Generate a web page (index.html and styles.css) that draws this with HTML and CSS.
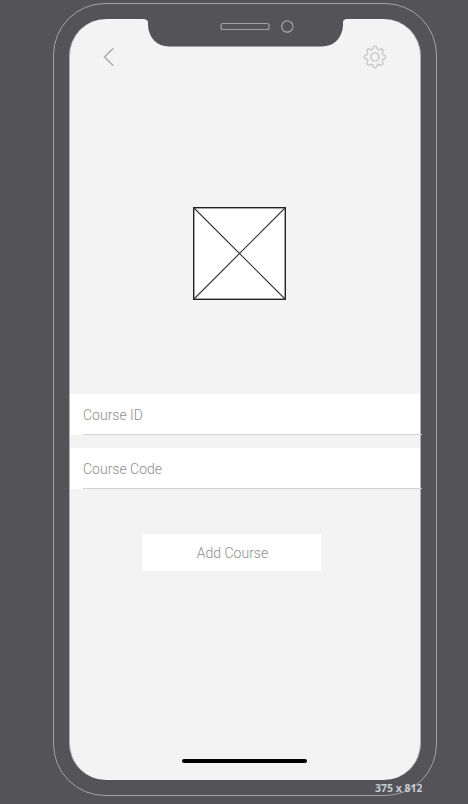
FILE: index.html
```html
<!DOCTYPE html>
<html lang="en">
<head>
<meta charset="utf-8">
<title>Add Course</title>
<link rel="stylesheet" href="styles.css">
</head>
<body>
<div class="phone">
  <main class="screen">
    <header class="toolbar">
      <svg class="back" viewBox="0 0 12 20"><path d="M10.3 1.2 1.5 10l8.8 8.8"/></svg>
      <svg class="gear" viewBox="-12 -12 24 24">
        <path d="M-1.400-10.200Q0-11.200 1.400-10.200L2.200-8.100Q3.200-7.200 4.200-7.300L6.220-8.200Q8-8 8.200-6.220L7.300-4.200Q7.200-3.200 8.100-2.200L10.200-1.400Q11.200 0 10.200 1.400L8.100 2.200Q7.200 3.200 7.300 4.200L8.200 6.220Q8 8 6.220 8.200L4.200 7.300Q3.200 7.200 2.200 8.100L1.400 10.200Q0 11.200-1.400 10.200L-2.200 8.100Q-3.200 7.200-4.200 7.300L-6.220 8.200Q-8 8-8.200 6.220L-7.300 4.200Q-7.200 3.200-8.100 2.200L-10.200 1.400Q-11.200 0-10.200-1.400L-8.100-2.200Q-7.200-3.200-7.300-4.200L-8.200-6.220Q-8-8-6.220-8.200L-4.200-7.300Q-3.200-7.200-2.200-8.100Z"/>
        <circle r="4.1"/>
      </svg>
    </header>
    <svg class="placeholder" viewBox="0 0 93 93">
      <rect x=".7" y=".7" width="91.6" height="91.6"/>
      <path d="m1 1 91 91M92 1 1 92"/>
    </svg>
    <form class="course-form">
      <div class="field"><span class="field-label">Course ID</span></div>
      <div class="field"><span class="field-label">Course Code</span></div>
      <button class="add" type="button">Add Course</button>
    </form>
    <div class="home-bar"></div>
  </main>
  <svg class="notch" viewBox="0 0 206 30">
    <path class="notch-shape" d="M0 0v1C4 1 6 2 6 5v3C7 20 15 28.500 27 28.500H180C192 28.500 200 20 201 8V5C201 2 202 1 206 1V0Z"/>
    <rect x="79" y="5.500" width="48" height="6" rx="2"/>
    <circle cx="145.300" cy="8.500" r="5.700"/>
  </svg>
  <span class="dimensions">375 x 812</span>
</div>
</body>
</html>
```
FILE: styles.css
```css
* { box-sizing: border-box; }
body {
  margin: 0;
  height: 804px;
  padding: 3px 0 0 53px;
  overflow: hidden;
  background: #545358;
  font-family: Roboto, sans-serif;
}
.phone {
  position: relative;
  width: 384px;
  height: 793px;
  padding: 15px;
  border: 1px solid #a3a3a6;
  border-radius: 52px;
}
.screen {
  display: flex;
  flex-direction: column;
  align-items: center;
  width: 352px;
  height: 761px;
  background: #f3f3f3;
  border: solid #b0b0b2;
  border-width: 0 1px;
  border-radius: 37px;
}
.toolbar {
  display: flex;
  justify-content: space-between;
  align-items: center;
  width: 100%;
  height: 24px;
  margin-top: 26px;
  padding: 0 33px;
}
.toolbar svg, .placeholder { fill: none; }
.back { width: 12px; height: 20px; stroke: #aeaeae; stroke-width: 1.6; }
.gear { width: 24px; height: 24px; stroke: #c8c8c8; stroke-width: 1.4; stroke-linejoin: round; }
.placeholder {
  flex: none;
  width: 93px;
  height: 93px;
  margin: 138px 0 94px 123px;
  align-self: flex-start;
  background: #fff;
}
.placeholder rect { stroke: #222; stroke-width: 1.4; }
.placeholder path { stroke: #333; stroke-width: 1.1; }
.course-form {
  display: flex;
  flex-direction: column;
  width: 100%;
  gap: 13px;
}
.field {
  height: 41px;
  padding-left: 13px;
  background: #fff;
}
.field-label {
  display: block;
  height: 41px;
  margin-right: -2px;
  border-bottom: 1px solid #d4d4d4;
  font-size: 14px;
  font-weight: 300;
  line-height: 42px;
  color: #8e8e8e;
}
.add {
  width: 179px;
  height: 37px;
  margin: 32px 0 0 72px;
  padding: 0 0 0 2px;
  border: 0;
  background: #fff;
  font: 300 14px Roboto, sans-serif;
  color: #8e8e8e;
}
.home-bar {
  width: 125px;
  height: 4px;
  margin: auto 2px 17px 0;
  border-radius: 2px;
  background: #000;
}
.notch {
  position: absolute;
  left: 88px;
  top: 14px;
  width: 206px;
  height: 30px;
  fill: none;
  stroke: #a3a3a6;
  stroke-width: 1.2;
}
.notch .notch-shape { fill: #545358; stroke: none; }
.dimensions {
  position: absolute;
  left: 321px;
  top: 777px;
  width: 47px;
  overflow: hidden;
  white-space: nowrap;
  font: 700 10.500px/14px "Open Sans", sans-serif;
  color: #c8ccd3;
}
```
